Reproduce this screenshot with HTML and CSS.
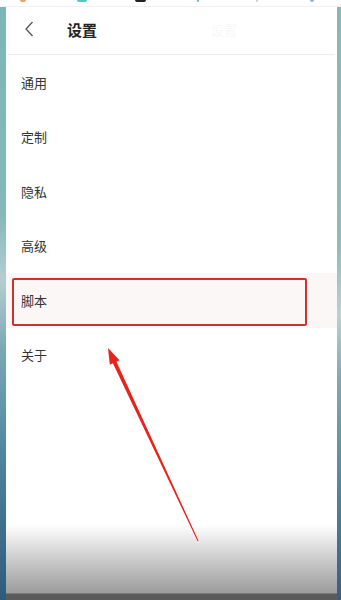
FILE: index.html
```html
<!DOCTYPE html>
<html lang="zh-CN">
<head>
<meta charset="utf-8">
<title>设置</title>
<link rel="stylesheet" href="styles.css">
</head>
<body>
<div class="screen">
  <div class="status">
    <span class="dot d1"></span>
    <span class="dot d2"></span>
    <span class="dot d3"></span>
    <span class="dot d4"></span>
    <span class="dot d5"></span>
    <span class="dot d6"></span>
  </div>
  <div class="frame">
    <div class="edge left"></div>
    <div class="panel">
      <header class="header">
        <svg class="back" width="10" height="16" viewBox="0 0 10 16"><path d="M8.5 1 L2 8 L8.5 15" fill="none" stroke="#555" stroke-width="1.3"/></svg>
        <span class="title">设置</span>
        <span class="ghost">设置</span>
      </header>
      <ul class="menu">
        <li class="item">通用</li>
        <li class="item">定制</li>
        <li class="item">隐私</li>
        <li class="item">高级</li>
        <li class="item active">脚本<span class="mark"></span></li>
        <li class="item">关于</li>
      </ul>
    </div>
    <div class="edge right"></div>
  </div>
  <svg class="arrow" width="341" height="600" viewBox="0 0 341 600">
    <polygon points="108,348 119.5,360.2 116.5,361.7 198.5,540.8 197.6,541.2 112.9,363.3 109.8,364.8" fill="#e8231c"/>
  </svg>
</div>
</body>
</html>
```
FILE: styles.css
```css
html, body {
  margin: 0;
  padding: 0;
  width: 341px;
  height: 600px;
  overflow: hidden;
  font-family: "Noto Sans CJK SC", "Noto Sans", sans-serif;
}
.screen {
  position: relative;
  width: 341px;
  height: 600px;
  display: flex;
  flex-direction: column;
  background: #fff;
}
.status {
  height: 7px;
  border-bottom: 1px solid #f0f0f0;
  box-sizing: border-box;
  position: relative;
}
.dot {
  position: absolute;
  top: 0;
  height: 2px;
  border-radius: 0 0 3px 3px;
}
.d1 { left: 20px; width: 6px; background: #f0a060; }
.d2 { left: 77px; width: 10px; background: #50c8c0; }
.d3 { left: 135px; width: 11px; background: #222; }
.d4 { left: 197px; width: 2px; background: #6ab0d8; }
.d5 { left: 256px; width: 2px; background: #ccc; }
.d6 { left: 310px; width: 4px; background: #8ab0d0; }
.frame {
  flex: 1;
  display: flex;
}
.edge {
  width: 6px;
  background: linear-gradient(to bottom, #7cb6b8 0%, #84b8ba 35%, #b4ced0 46%, #78a8b4 58%, #4f86a2 75%, #2f5b7a 100%);
}
.edge.right {
  width: 4px;
  background: linear-gradient(to bottom, #86b8b8 0%, #8cbcbc 40%, #b8d2d2 52%, #80acb6 62%, #5289a4 80%, #36607e 100%);
}
.panel {
  flex: 1;
  display: flex;
  flex-direction: column;
  background: linear-gradient(to bottom, #fff 0, #fff 518px, #d2d2d2 548px, #9c9c9c 586px, #5c5c5c 587px, #5a5a5a 593px);
}
.header {
  height: 48px;
  box-sizing: border-box;
  padding-bottom: 3px;
  display: flex;
  align-items: center;
  border-bottom: 1px solid #ececec;
  margin: 0 2px;
}
.back {
  margin-left: 16px;
}
.title {
  margin-left: 33px;
  font-size: 15px;
  font-weight: 600;
  color: #222;
}
.ghost {
  margin-left: 114px;
  font-size: 13px;
  color: #f7f7f7;
}
.menu {
  list-style: none;
  margin: 0;
  padding: 0;
}
.item {
  height: 54.5px;
  display: flex;
  align-items: center;
  padding-left: 15px;
  font-size: 13px;
  color: #333;
  position: relative;
}
.item.active {
  background: #fbf7f7;
}
.mark {
  position: absolute;
  left: 6px;
  top: 5px;
  width: 295px;
  height: 48px;
  box-sizing: border-box;
  border: 2px solid #d0302e;
  border-radius: 2px;
}
.arrow {
  position: absolute;
  left: 0;
  top: 0;
  pointer-events: none;
}
```
